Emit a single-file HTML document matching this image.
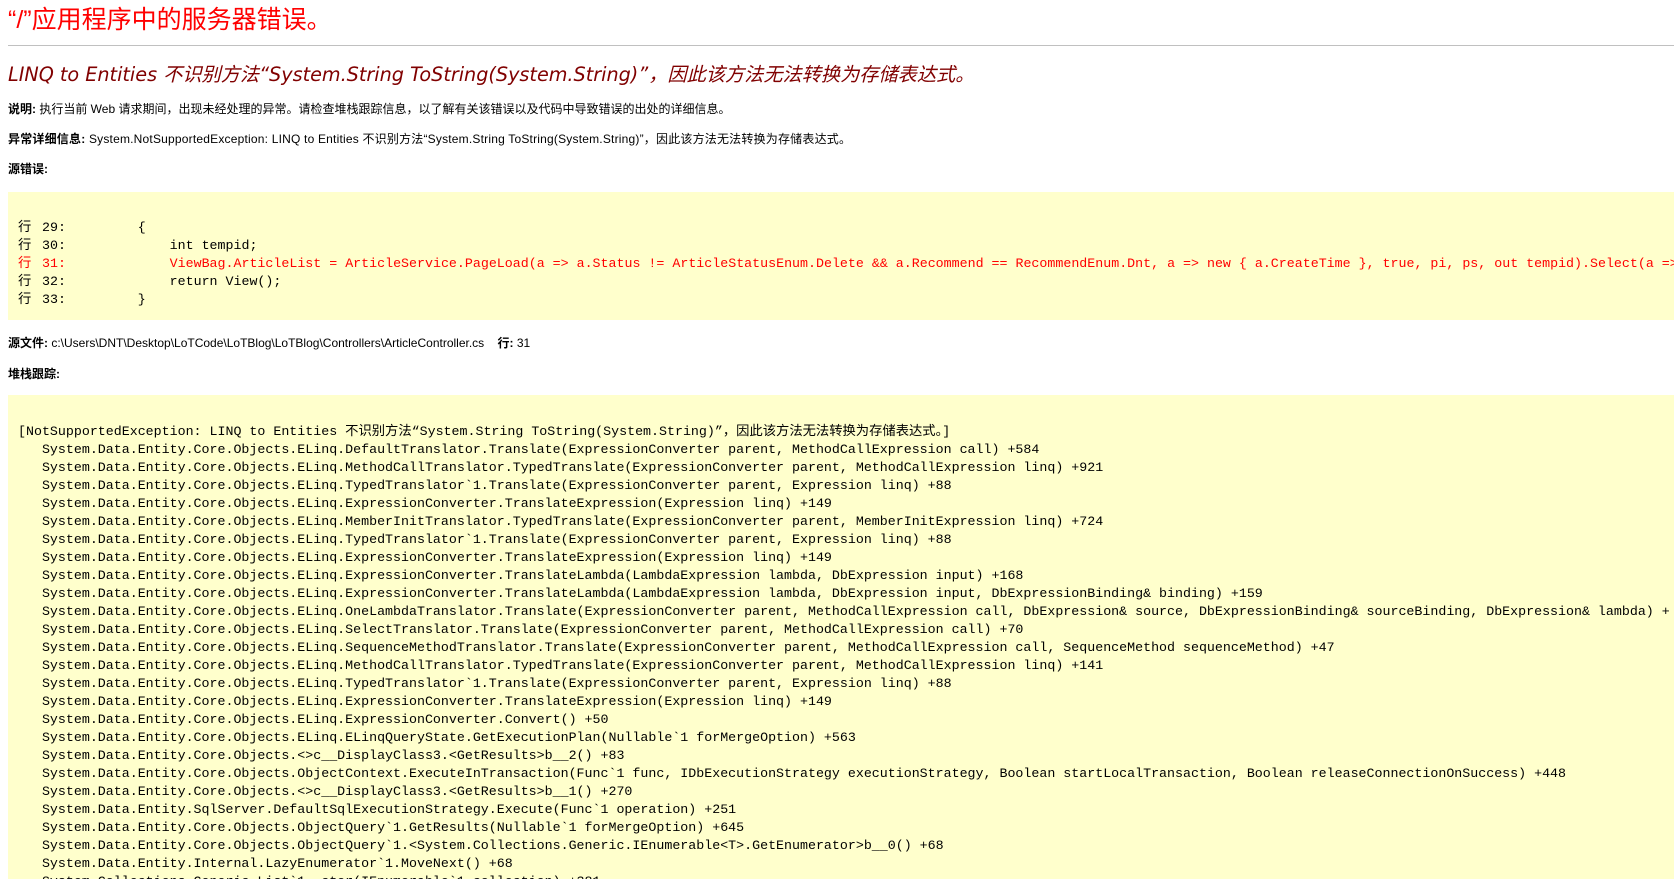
<!DOCTYPE html>
<html><head><meta charset="utf-8">
<style>
html,body{margin:0;padding:0;background:#fff;width:1674px;height:879px;overflow:hidden;position:relative;}
.a{position:absolute;left:8px;white-space:nowrap;}
.t{font-family:"Liberation Sans","Noto Sans CJK SC",sans-serif;}
#title{top:5px;font-size:25px;line-height:30px;color:#ff0000;}
#hr{position:absolute;left:8px;right:0;top:45px;height:0;border-top:1px solid #c0c0c0;}
#h2{top:62px;font-size:19.2px;line-height:26px;color:#800000;font-style:italic;font-family:"DejaVu Sans","Noto Sans CJK SC",sans-serif;}
.p{font-size:12px;line-height:16px;color:#000;}
.p b{font-weight:bold;}
.box{position:absolute;left:8px;right:0;background:#ffffcc;}
pre{margin:0;position:absolute;left:18px;right:0;overflow:hidden;font-family:"Liberation Mono","Noto Sans CJK SC",monospace;font-size:13.3px;line-height:18px;color:#000;white-space:pre;}
.h{display:inline-block;width:16px;}
.r{color:#ff0000;}
</style></head><body>
<div id="title" class="a t">“/”应用程序中的服务器错误。</div>
<div id="hr"></div>
<div id="h2" class="a">LINQ to Entities 不识别方法“System.String ToString(System.String)”，因此该方法无法转换为存储表达式。</div>
<div class="a t p" style="top:101px"><b>说明:</b> 执行当前 Web 请求期间，出现未经处理的异常。请检查堆栈跟踪信息，以了解有关该错误以及代码中导致错误的出处的详细信息。</div>
<div class="a t p" style="top:131px;letter-spacing:0.2px"><b>异常详细信息:</b> System.NotSupportedException: LINQ to Entities 不识别方法“System.String ToString(System.String)”，因此该方法无法转换为存储表达式。</div>
<div class="a t p" style="top:161px"><b>源错误:</b></div>
<div class="box" style="top:192px;height:128px;"></div>
<pre style="top:219px"><span class="h">行</span> 29:         {
<span class="h">行</span> 30:             int tempid;
<span class="r"><span class="h">行</span> 31:             ViewBag.ArticleList = ArticleService.PageLoad(a =&gt; a.Status != ArticleStatusEnum.Delete &amp;&amp; a.Recommend == RecommendEnum.Dnt, a =&gt; new { a.CreateTime }, true, pi, ps, out tempid).Select(a =&gt; new { a.Id })</span>
<span class="h">行</span> 32:             return View();
<span class="h">行</span> 33:         }</pre>
<div class="a t p" style="top:335px"><b>源文件:</b> c:\Users\DNT\Desktop\LoTCode\LoTBlog\LoTBlog\Controllers\ArticleController.cs &nbsp;&nbsp; <b>行:</b> 31</div>
<div class="a t p" style="top:366px"><b>堆栈跟踪:</b></div>
<div class="box" style="top:395px;height:500px;"></div>
<pre style="top:423px;bottom:0">[NotSupportedException: LINQ to Entities 不识别方法“System.String ToString(System.String)”，因此该方法无法转换为存储表达式。]
   System.Data.Entity.Core.Objects.ELinq.DefaultTranslator.Translate(ExpressionConverter parent, MethodCallExpression call) +584
   System.Data.Entity.Core.Objects.ELinq.MethodCallTranslator.TypedTranslate(ExpressionConverter parent, MethodCallExpression linq) +921
   System.Data.Entity.Core.Objects.ELinq.TypedTranslator`1.Translate(ExpressionConverter parent, Expression linq) +88
   System.Data.Entity.Core.Objects.ELinq.ExpressionConverter.TranslateExpression(Expression linq) +149
   System.Data.Entity.Core.Objects.ELinq.MemberInitTranslator.TypedTranslate(ExpressionConverter parent, MemberInitExpression linq) +724
   System.Data.Entity.Core.Objects.ELinq.TypedTranslator`1.Translate(ExpressionConverter parent, Expression linq) +88
   System.Data.Entity.Core.Objects.ELinq.ExpressionConverter.TranslateExpression(Expression linq) +149
   System.Data.Entity.Core.Objects.ELinq.ExpressionConverter.TranslateLambda(LambdaExpression lambda, DbExpression input) +168
   System.Data.Entity.Core.Objects.ELinq.ExpressionConverter.TranslateLambda(LambdaExpression lambda, DbExpression input, DbExpressionBinding&amp; binding) +159
   System.Data.Entity.Core.Objects.ELinq.OneLambdaTranslator.Translate(ExpressionConverter parent, MethodCallExpression call, DbExpression&amp; source, DbExpressionBinding&amp; sourceBinding, DbExpression&amp; lambda) +
   System.Data.Entity.Core.Objects.ELinq.SelectTranslator.Translate(ExpressionConverter parent, MethodCallExpression call) +70
   System.Data.Entity.Core.Objects.ELinq.SequenceMethodTranslator.Translate(ExpressionConverter parent, MethodCallExpression call, SequenceMethod sequenceMethod) +47
   System.Data.Entity.Core.Objects.ELinq.MethodCallTranslator.TypedTranslate(ExpressionConverter parent, MethodCallExpression linq) +141
   System.Data.Entity.Core.Objects.ELinq.TypedTranslator`1.Translate(ExpressionConverter parent, Expression linq) +88
   System.Data.Entity.Core.Objects.ELinq.ExpressionConverter.TranslateExpression(Expression linq) +149
   System.Data.Entity.Core.Objects.ELinq.ExpressionConverter.Convert() +50
   System.Data.Entity.Core.Objects.ELinq.ELinqQueryState.GetExecutionPlan(Nullable`1 forMergeOption) +563
   System.Data.Entity.Core.Objects.&lt;&gt;c__DisplayClass3.&lt;GetResults&gt;b__2() +83
   System.Data.Entity.Core.Objects.ObjectContext.ExecuteInTransaction(Func`1 func, IDbExecutionStrategy executionStrategy, Boolean startLocalTransaction, Boolean releaseConnectionOnSuccess) +448
   System.Data.Entity.Core.Objects.&lt;&gt;c__DisplayClass3.&lt;GetResults&gt;b__1() +270
   System.Data.Entity.SqlServer.DefaultSqlExecutionStrategy.Execute(Func`1 operation) +251
   System.Data.Entity.Core.Objects.ObjectQuery`1.GetResults(Nullable`1 forMergeOption) +645
   System.Data.Entity.Core.Objects.ObjectQuery`1.&lt;System.Collections.Generic.IEnumerable&lt;T&gt;.GetEnumerator&gt;b__0() +68
   System.Data.Entity.Internal.LazyEnumerator`1.MoveNext() +68
   System.Collections.Generic.List`1..ctor(IEnumerable`1 collection) +381</pre>
</body></html>
